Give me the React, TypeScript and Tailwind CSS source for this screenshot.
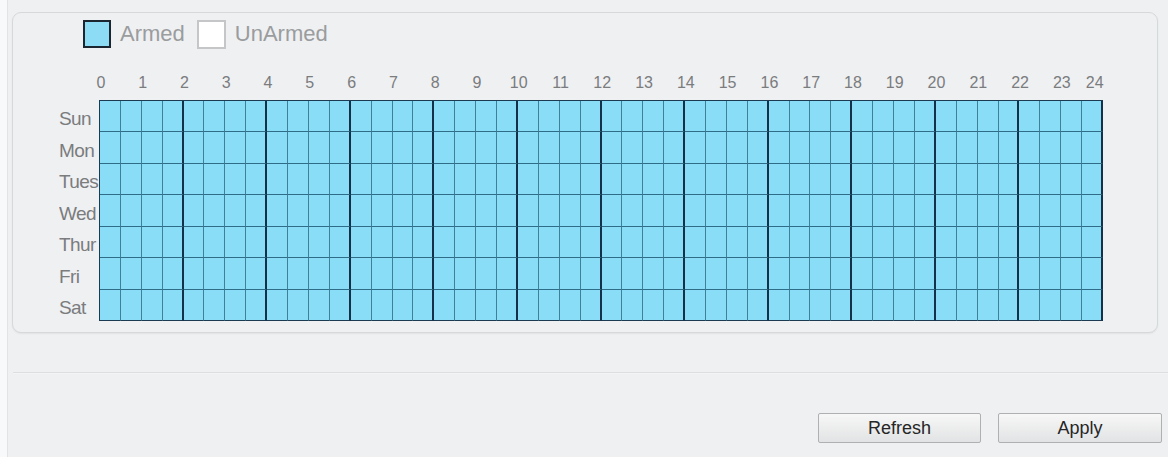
import React from "react";

const days = ["Sun", "Mon", "Tues", "Wed", "Thur", "Fri", "Sat"];
const hours = Array.from({ length: 25 }, (_, i) => i);
const cols = Array.from({ length: 48 }, (_, i) => i);

export default function App() {
  return (
    <div
      className="w-[1168px] h-[457px] bg-[#eef0f2] flex overflow-hidden"
      style={{ fontFamily: '"Liberation Sans", Arial, sans-serif' }}
    >
      <div className="w-[8px] h-full bg-[#f8f9fa] border-r border-[#e1e3e5]" />
      <div className="flex-1 flex flex-col">
        {/* schedule panel */}
        <div className="ml-[4px] mt-[12px] w-[1146px] h-[321px] rounded-[9px] border border-[#d6d9dc] bg-[#eff0f2] shadow-[0_1px_2px_rgba(0,0,0,0.06)] flex flex-col">
          {/* legend */}
          <div className="flex items-center pl-[70px] pt-[6px] h-[36px]">
            <div className="w-[28px] h-[28px] border-2 border-[#1b2630] bg-[#8ddcf6]" />
            <span className="ml-[9px] text-[22px] leading-none text-[#9a9c9e]">Armed</span>
            <div className="ml-[12px] w-[29px] h-[29px] border-2 border-[#c4c6c8] bg-white" />
            <span className="ml-[9px] text-[22px] leading-none text-[#9a9c9e]">UnArmed</span>
          </div>
          {/* hour labels */}
          <div className="flex mt-[23px] pl-[67px] h-[50px]">
            {hours.map((h) => (
              <div
                key={h}
                className={`w-[41.79px] shrink-0 text-center text-[16px] leading-[22px] text-[#7a7c7e] ${
                  h === 24 ? "-ml-[9px]" : ""
                }`}
              >
                {h}
              </div>
            ))}
          </div>
          {/* grid area */}
          <div className="flex -mt-[22px] pl-[46px]">
            <div className="w-[40px] flex flex-col overflow-hidden">
              {days.map((d) => (
                <div
                  key={d}
                  className="h-[31.43px] flex items-center pt-[8px] text-[19px] tracking-[-0.6px] text-[#7a7c7e] whitespace-nowrap"
                >
                  {d}
                </div>
              ))}
            </div>
            <div className="w-[1004px] h-[221px] border-l border-t border-[#1c3a52] grid grid-cols-[repeat(48,1fr)] grid-rows-[repeat(7,1fr)] bg-[#89ddf7]">
              {days.map((d, r) =>
                cols.map((c) => (
                  <div
                    key={d + c}
                    className={`border-b ${r === 6 ? "border-b-[#1c3a52]" : "border-b-[#2f6c88]"} ${
                      c % 4 === 3 ? "border-r-2 border-r-[#15314a]" : "border-r border-r-[#3f8099]"
                    }`}
                  />
                ))
              )}
            </div>
          </div>
        </div>
        {/* separator */}
        <div className="mt-[39px] ml-[5px] h-[2px] border-t border-[#dcdee1] bg-[#f3f4f5]" />
        {/* buttons */}
        <div className="flex justify-end gap-[17px] mt-[39px] pr-[6px]">
          <button className="w-[163px] h-[30px] border border-[#aeb0b2] rounded-[2px] bg-gradient-to-b from-[#f7f7f7] to-[#e2e3e4] text-[18px] text-[#262626] leading-none">
            Refresh
          </button>
          <button className="w-[164px] h-[30px] border border-[#aeb0b2] rounded-[2px] bg-gradient-to-b from-[#f7f7f7] to-[#e2e3e4] text-[18px] text-[#262626] leading-none">
            Apply
          </button>
        </div>
      </div>
    </div>
  );
}
